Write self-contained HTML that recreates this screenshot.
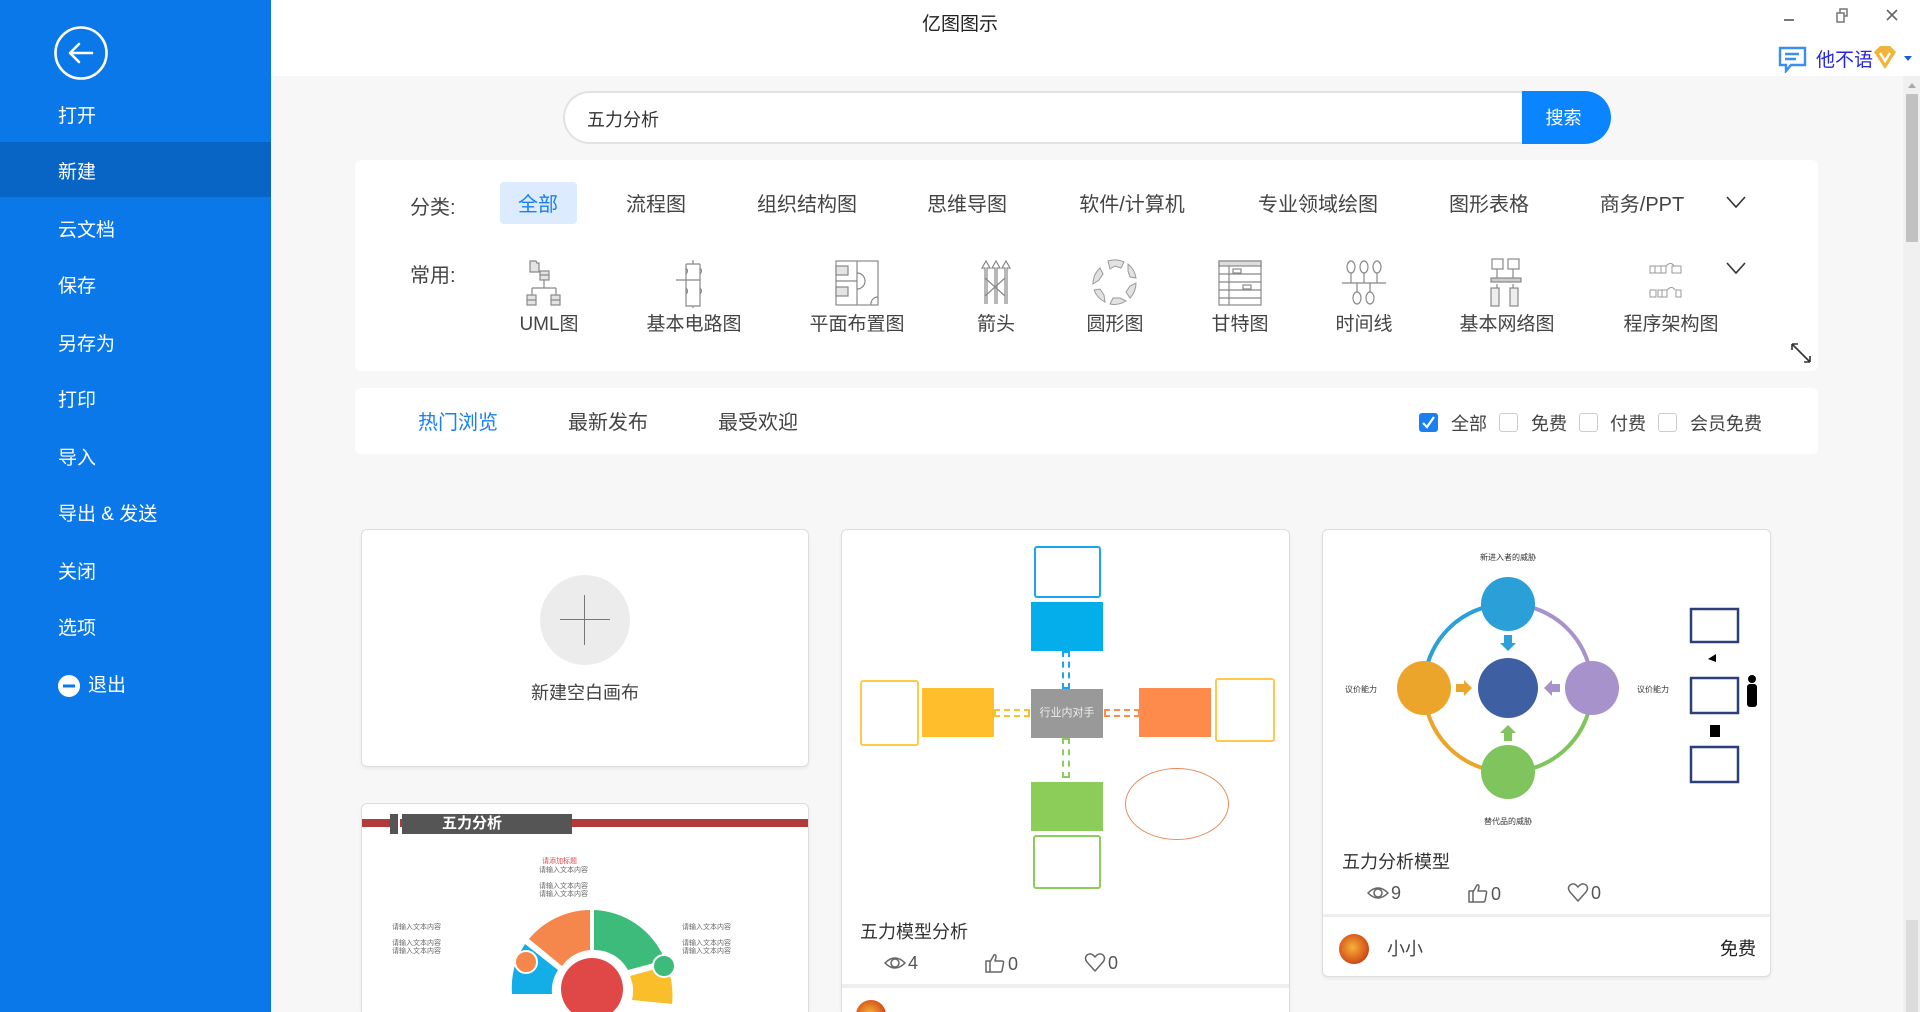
<!DOCTYPE html>
<html><head><meta charset="utf-8">
<style>
*{margin:0;padding:0;box-sizing:border-box}
html{width:1920px;height:1012px;overflow:hidden}
body{width:1920px;height:1012px;overflow:hidden;background:#f7f7f7;font-family:"Liberation Sans","Noto Sans CJK SC",sans-serif;color:#333;position:relative}
.a{position:absolute}
.side{left:0;top:0;width:271px;height:1012px;background:#0b78e9}
.mi{position:absolute;left:58px;color:#fff;font-size:19px;line-height:24px}
.cat{position:absolute;top:193px;font-size:20px;color:#444;line-height:24px;transform:translateX(-50%);white-space:nowrap}
.lab{position:absolute;top:313px;font-size:19px;color:#444;line-height:24px;transform:translateX(-50%);white-space:nowrap}
.ic{position:absolute;top:258px;width:50px;height:50px;transform:translateX(-50%)}
.card{position:absolute;background:#fff;border:1px solid #ddd;border-radius:6px;box-shadow:0 2px 3px rgba(0,0,0,.06);overflow:hidden}
.cb{position:absolute;top:413px;width:19px;height:19px;border:1px solid #ccc;border-radius:3px;background:#fff}
.cl{position:absolute;top:410px;font-size:18px;color:#444}
.st{position:absolute;font-size:18px;color:#555;line-height:22px}
.st svg{vertical-align:-4px;margin-right:2px}
</style></head><body>
<svg width="0" height="0" style="position:absolute"><defs>
<g id="eye"><path d="M1 10Q11 0 21 10Q11 20 1 10Z" fill="none" stroke="#666" stroke-width="1.5"/><circle cx="11" cy="10" r="4" fill="none" stroke="#666" stroke-width="1.5"/></g>
<g id="thumb"><path d="M2 9H6V20H2ZM6 10L10 3Q12 2 12 5L11 9H18Q20 9 19.5 11L18 19Q17.5 20 16 20H6" fill="none" stroke="#666" stroke-width="1.5" stroke-linejoin="round"/></g>
<g id="heart"><path d="M11 19L3 10Q0 6 3 3Q7 0 11 5Q15 0 19 3Q22 6 19 10Z" fill="none" stroke="#666" stroke-width="1.5" stroke-linejoin="round"/></g>
</defs></svg>
<!-- header -->
<div class="a" style="left:271px;top:0;width:1649px;height:76px;background:#fff"></div>
<div class="a" style="left:0;width:1920px;top:9px;text-align:center;font-size:19px;color:#222">亿图图示</div>
<div class="a" style="left:1784px;top:19px;width:10px;height:2px;background:#777"></div>
<svg class="a" style="left:1836px;top:8px" width="14" height="16"><rect x="4" y="1" width="7" height="7" fill="none" stroke="#777" stroke-width="1.5"/><rect x="1" y="5" width="7" height="9" fill="#fff" stroke="#777" stroke-width="1.5"/></svg>
<svg class="a" style="left:1886px;top:9px" width="12" height="12"><path d="M1 1L11 11M11 1L1 11" stroke="#666" stroke-width="1.6"/></svg>
<svg class="a" style="left:1777px;top:45px" width="32" height="28"><path d="M3 3H28V20H14L9 26V20H3Z" fill="none" stroke="#3a8ef0" stroke-width="2.4"/><path d="M8 9H22M8 14H19" stroke="#3a8ef0" stroke-width="2.4"/></svg>
<div class="a" style="left:1816px;top:45px;font-size:19px;color:#2626e0">他不语</div>
<svg class="a" style="left:1873px;top:45px" width="24" height="26"><path d="M1 7L7 1H17L23 7L12 24Z" fill="#f0b43a"/><path d="M7 8L12 16L17 8" fill="none" stroke="#fff" stroke-width="2.4"/></svg>
<div class="a" style="left:1904px;top:56px;width:0;height:0;border-left:4px solid transparent;border-right:4px solid transparent;border-top:5px solid #1a5fd0"></div>
<!-- scrollbar -->
<div class="a" style="left:1903px;top:76px;width:17px;height:936px;background:#f0f0f0"></div>
<div class="a" style="left:1908px;top:83px;border-left:4px solid transparent;border-right:4px solid transparent;border-bottom:5px solid #aaa"></div>
<div class="a" style="left:1906px;top:94px;width:12px;height:148px;background:#c1c1c1"></div>
<div class="a" style="left:1906px;top:920px;width:12px;height:92px;background:#dcdcdc"></div>

<!-- sidebar -->
<div class="a side"></div>
<div class="a" style="left:0;top:142px;width:271px;height:55px;background:#0864c5"></div>
<svg class="a" style="left:53px;top:25px" width="56" height="56"><circle cx="28" cy="28" r="25.5" fill="none" stroke="#fff" stroke-width="2.6"/><path d="M39 28H18M26 19L17 28L26 37" fill="none" stroke="#fff" stroke-width="2.6" stroke-linecap="round" stroke-linejoin="round"/></svg>
<div class="mi" style="top:105px">打开</div>
<div class="mi" style="top:161px">新建</div>
<div class="mi" style="top:219px">云文档</div>
<div class="mi" style="top:275px">保存</div>
<div class="mi" style="top:333px">另存为</div>
<div class="mi" style="top:389px">打印</div>
<div class="mi" style="top:447px">导入</div>
<div class="mi" style="top:503px">导出 &amp; 发送</div>
<div class="mi" style="top:561px">关闭</div>
<div class="mi" style="top:617px">选项</div>
<svg class="a" style="left:57px;top:674px" width="24" height="24"><circle cx="12" cy="12" r="11" fill="#fff"/><rect x="6" y="10.5" width="12" height="3" fill="#0b78e9"/></svg>
<div class="mi" style="top:674px;left:88px">退出</div>

<!-- search -->
<div class="a" style="left:563px;top:91px;width:1000px;height:53px;background:#fff;border:2px solid #e2e2e2;border-right:none;border-radius:27px 0 0 27px"></div>
<div class="a" style="left:587px;top:106px;font-size:18px;color:#333">五力分析</div>
<div class="a" style="left:1522px;top:91px;width:89px;height:53px;background:#0a84ff;border-radius:0 27px 27px 0;color:#fff;font-size:18px;text-align:center;line-height:55px;padding-right:6px">搜索</div>

<!-- category panel -->
<div class="a" style="left:355px;top:160px;width:1463px;height:211px;background:#fff;border-radius:6px"></div>
<div class="a" style="left:410px;top:191px;font-size:20px;color:#444">分类:</div>
<div class="a" style="left:500px;top:182px;width:77px;height:42px;background:#dcebfd;border-radius:4px"></div>
<div class="cat" style="left:538px;color:#1a7ff0">全部</div>
<div class="cat" style="left:656px">流程图</div>
<div class="cat" style="left:807px">组织结构图</div>
<div class="cat" style="left:967px">思维导图</div>
<div class="cat" style="left:1132px">软件/计算机</div>
<div class="cat" style="left:1318px">专业领域绘图</div>
<div class="cat" style="left:1489px">图形表格</div>
<div class="cat" style="left:1642px">商务/PPT</div>
<svg class="a" style="left:1726px;top:195px" width="20" height="14"><path d="M1 2L10 12L19 2" fill="none" stroke="#333" stroke-width="1.6"/></svg>
<svg class="a" style="left:1726px;top:261px" width="20" height="14"><path d="M1 2L10 12L19 2" fill="none" stroke="#333" stroke-width="1.6"/></svg>
<div class="a" style="left:410px;top:259px;font-size:20px;color:#444">常用:</div>
<!-- icons -->
<svg class="ic" style="left:549px" viewBox="0 0 50 50"><g fill="#e4e4e4" stroke="#888" stroke-width="1.2"><path d="M6 3H12L13 5H15V14H6Z"/><rect x="16" y="13" width="9" height="9"/><rect x="3" y="37" width="9" height="10"/><rect x="27" y="37" width="9" height="10"/></g><path d="M20 22V30M8 30H32M8 30V37M32 30V37M16 17H25M3 42H12M27 42H36" stroke="#888" stroke-width="1.2" fill="none"/></svg>
<svg class="ic" style="left:694px" viewBox="0 0 50 50"><g fill="none" stroke="#888" stroke-width="1.2"><path d="M24 2V6M17 6H31M17 6V48H31V6M7 22H31M24 48V52"/><path d="M17 10q3 3 0 6M31 10q3 3 0 6M17 30q3 3 0 6M31 30q3 3 0 6"/></g></svg>
<svg class="ic" style="left:857px" viewBox="0 0 50 50"><g stroke="#888" stroke-width="1.2"><rect x="4" y="3" width="42" height="44" fill="#fff"/><path d="M25 3V47M4 23H25" fill="none"/><rect x="4" y="8" width="12" height="9" fill="#e4e4e4"/><rect x="4" y="29" width="12" height="9" fill="#e4e4e4"/><path d="M25 15A8 8 0 0 1 25 31M46 39A7 7 0 0 0 39 47" fill="none"/></g></svg>
<svg class="ic" style="left:996px" viewBox="0 0 50 50"><g fill="none" stroke="#888" stroke-width="1.2"><path d="M14 46V10L11 10L15 3L19 10H16V46M24 46V10L21 10L25 3L29 10H26V46M34 46V10L31 10L35 3L39 10H36V46"/><path d="M14 20L34 38M34 20L14 38"/></g></svg>
<svg class="ic" style="left:1115px" viewBox="0 0 50 50"><g fill="#e2e2e2" stroke="#999" stroke-width="1"><path d="M18 3A22 22 0 0 1 34 4L31 10L25 8L20 11Z"/><path d="M38 6A22 22 0 0 1 46 20L40 19L38 13Z"/><path d="M46 25A22 22 0 0 1 40 40L36 34L40 28Z"/><path d="M36 43A22 22 0 0 1 20 46L23 40L30 40Z"/><path d="M15 44A22 22 0 0 1 4 32L10 31L14 37Z"/><path d="M3 26A22 22 0 0 1 10 10L13 16L9 22Z"/></g></svg>
<svg class="ic" style="left:1240px" viewBox="0 0 50 50"><g stroke="#888" stroke-width="1.2"><rect x="4" y="3" width="42" height="44" fill="#fff"/><rect x="4" y="3" width="42" height="5" fill="#ddd"/><path d="M4 16H46M4 24H46M4 32H46M4 40H46M14 8V47" fill="none"/><rect x="18" y="11" width="8" height="4" fill="#fff"/><rect x="28" y="27" width="8" height="4" fill="#fff"/></g></svg>
<svg class="ic" style="left:1364px" viewBox="0 0 50 50"><g fill="#fff" stroke="#888" stroke-width="1.2"><ellipse cx="12" cy="9" rx="4" ry="6"/><ellipse cx="25" cy="9" rx="4" ry="6"/><ellipse cx="38" cy="9" rx="4" ry="6"/><ellipse cx="18" cy="40" rx="4" ry="6"/><ellipse cx="31" cy="40" rx="4" ry="6"/><path d="M3 25H47M12 15V25M25 15V25M38 15V25M18 25V34M31 25V34" fill="none"/></g></svg>
<svg class="ic" style="left:1507px" viewBox="0 0 50 50"><g fill="#fff" stroke="#888" stroke-width="1.2"><rect x="10" y="1" width="11" height="10"/><rect x="26" y="1" width="11" height="10"/><path d="M15 11V20M31 11V20M15 26V30M31 26V30"/><rect x="9" y="20" width="30" height="4" fill="#ccc"/><rect x="9" y="30" width="8" height="18" fill="#eee"/><rect x="28" y="30" width="8" height="18" fill="#eee"/></g></svg>
<svg class="ic" style="left:1671px" viewBox="0 0 50 50"><g fill="#fff" stroke="#999" stroke-width="1"><rect x="4" y="8" width="16" height="7"/><rect x="26" y="8" width="9" height="7"/><rect x="4" y="32" width="6" height="7"/><rect x="12" y="32" width="9" height="7"/><rect x="30" y="32" width="5" height="7"/><path d="M9 8V15M15 8V15M16 32V39M20 8q5-5 8 0M21 32q5-5 8 0" fill="none"/></g></svg>
<div class="lab" style="left:549px">UML图</div>
<div class="lab" style="left:694px">基本电路图</div>
<div class="lab" style="left:857px">平面布置图</div>
<div class="lab" style="left:996px">箭头</div>
<div class="lab" style="left:1115px">圆形图</div>
<div class="lab" style="left:1240px">甘特图</div>
<div class="lab" style="left:1364px">时间线</div>
<div class="lab" style="left:1507px">基本网络图</div>
<div class="lab" style="left:1671px">程序架构图</div>
<svg class="a" style="left:1790px;top:342px" width="22" height="22"><path d="M2 2L20 20M2 2V8M2 2H8M20 20V14M20 20H14" fill="none" stroke="#333" stroke-width="1.6"/></svg>

<!-- tabs panel -->
<div class="a" style="left:355px;top:388px;width:1463px;height:66px;background:#fff;border-radius:6px"></div>
<div class="a" style="left:418px;top:406px;font-size:20px;color:#1a7ff0">热门浏览</div>
<div class="a" style="left:568px;top:406px;font-size:20px;color:#444">最新发布</div>
<div class="a" style="left:718px;top:406px;font-size:20px;color:#444">最受欢迎</div>
<div class="cb" style="left:1419px;background:#1a7ff0;border-color:#1a7ff0"><svg width="17" height="17" style="position:absolute;left:0;top:0"><path d="M3 9L7 13L14 3" fill="none" stroke="#fff" stroke-width="2.2"/></svg></div>
<div class="cl" style="left:1451px">全部</div>
<div class="cb" style="left:1499px"></div><div class="cl" style="left:1531px">免费</div>
<div class="cb" style="left:1579px"></div><div class="cl" style="left:1610px">付费</div>
<div class="cb" style="left:1658px"></div><div class="cl" style="left:1690px">会员免费</div>

<!-- card1 -->
<div class="card" style="left:361px;top:529px;width:448px;height:238px">
<div class="a" style="left:178px;top:45px;width:90px;height:90px;border-radius:50%;background:#ececec"></div>
<div class="a" style="left:222px;top:65px;width:1px;height:50px;background:#777"></div>
<div class="a" style="left:198px;top:89px;width:50px;height:1px;background:#777"></div>
<div class="a" style="left:0;width:446px;top:149px;text-align:center;font-size:18px;color:#444">新建空白画布</div>
</div>

<!-- card4 -->
<div class="card" style="left:361px;top:803px;width:448px;height:209px;border-bottom:none;border-radius:6px 6px 0 0">
<div class="a" style="left:0;top:15px;width:448px;height:8px;background:#b23a3a"></div>
<div class="a" style="left:28px;top:10px;width:10px;height:20px;background:#555;border-right:2px solid #fff"></div>
<div class="a" style="left:40px;top:10px;width:170px;height:20px;background:#555;color:#fff;font-size:15px;font-weight:bold;text-align:center;line-height:20px;padding-right:30px">五力分析</div>
<div class="a" style="left:180px;top:52px;font-size:7px;color:#e04848">请添加标题</div>
<div class="a" style="left:177px;top:63px;font-size:7px;color:#666;line-height:8px">请输入文本内容<br><br>请输入文本内容<br>请输入文本内容</div>
<div class="a" style="left:30px;top:120px;font-size:7px;color:#666;line-height:8px">请输入文本内容<br><br>请输入文本内容<br>请输入文本内容</div>
<div class="a" style="left:320px;top:120px;font-size:7px;color:#666;line-height:8px">请输入文本内容<br><br>请输入文本内容<br>请输入文本内容</div>
<svg class="a" style="left:130px;top:100px" width="200" height="130" viewBox="0 0 200 130">
<path d="M98 6A80 80 0 0 0 37 35L70 62A38 38 0 0 1 98 46Z" fill="#f5874c"/>
<path d="M102 6A80 80 0 0 1 173 56L136 66A38 38 0 0 0 102 46Z" fill="#3dbb7a"/>
<path d="M33 40A80 80 0 0 0 20 90L60 90A38 38 0 0 1 66 66Z" fill="#13aee8"/>
<path d="M175 62A80 80 0 0 1 180 100L140 96A38 38 0 0 0 138 72Z" fill="#f9be2a"/>
<circle cx="100" cy="85" r="31" fill="#e04848"/>
<circle cx="34" cy="58" r="11" fill="#f5874c" stroke="#fff" stroke-width="2"/>
<circle cx="172" cy="62" r="11" fill="#3dbb7a" stroke="#fff" stroke-width="2"/>
</svg>
</div>

<!-- card2 -->
<div class="card" style="left:841px;top:529px;width:449px;height:483px;border-bottom:none;border-radius:6px 6px 0 0">
<div class="a" style="left:0;top:454px;width:449px;height:4px;background:#eee"></div>
<div class="a" style="left:14px;top:470px;width:30px;height:30px;border-radius:50%;background:radial-gradient(circle at 45% 45%,#f5b23a,#d8581a 60%,#7a2a10)"></div>
<div class="a" style="left:192px;top:16px;width:67px;height:52px;border:2px solid #1aa5ee;border-radius:3px"></div>
<div class="a" style="left:189px;top:72px;width:72px;height:49px;background:#03aeea"></div>
<div class="a" style="left:220px;top:121px;width:8px;height:38px;border:2px dashed #1aa5ee"></div>
<div class="a" style="left:189px;top:159px;width:72px;height:49px;background:#999;color:#eee;font-size:11px;text-align:center;line-height:49px">行业内对手</div>
<div class="a" style="left:18px;top:150px;width:59px;height:66px;border:2px solid #ffc94a;border-radius:3px"></div>
<div class="a" style="left:80px;top:158px;width:72px;height:49px;background:#ffbe2b"></div>
<div class="a" style="left:152px;top:179px;width:36px;height:8px;border:2px dashed #ffbe2b"></div>
<div class="a" style="left:297px;top:158px;width:72px;height:49px;background:#fe8a4c"></div>
<div class="a" style="left:262px;top:179px;width:36px;height:8px;border:2px dashed #fe8a4c"></div>
<div class="a" style="left:373px;top:148px;width:60px;height:64px;border:2px solid #ffc94a;border-radius:3px"></div>
<div class="a" style="left:220px;top:208px;width:8px;height:40px;border:2px dashed #8ccd5a"></div>
<div class="a" style="left:189px;top:252px;width:72px;height:49px;background:#8ccd5a"></div>
<div class="a" style="left:191px;top:305px;width:68px;height:54px;border:2px solid #8ccd5a;border-radius:3px"></div>
<div class="a" style="left:283px;top:238px;width:104px;height:72px;border:1.5px solid #e88a5c;border-radius:50%"></div>
<div class="a" style="left:18px;top:388px;font-size:18px;color:#333">五力模型分析</div>
<div class="st" style="left:42px;top:422px"><svg width="22" height="20"><use href="#eye"/></svg>4</div>
<div class="st" style="left:142px;top:422px"><svg width="22" height="22"><use href="#thumb"/></svg>0</div>
<div class="st" style="left:242px;top:422px"><svg width="22" height="21"><use href="#heart"/></svg>0</div>
</div>

<!-- card3 -->
<div class="card" style="left:1322px;top:529px;width:449px;height:448px">
<svg class="a" style="left:0;top:0" width="449" height="300">
<path d="M185 74A84 84 0 0 0 101 158" stroke="#2a9fd8" stroke-width="4" fill="none"/>
<path d="M185 74A84 84 0 0 1 269 158" stroke="#a792cc" stroke-width="4" fill="none"/>
<path d="M101 158A84 84 0 0 0 185 242" stroke="#eba52a" stroke-width="4" fill="none"/>
<path d="M269 158A84 84 0 0 1 185 242" stroke="#7fc45c" stroke-width="4" fill="none"/>
<circle cx="185" cy="74" r="27" fill="#2a9fd8"/>
<circle cx="101" cy="158" r="27" fill="#eba52a"/>
<circle cx="269" cy="158" r="27" fill="#a792cc"/>
<circle cx="185" cy="242" r="27" fill="#7fc45c"/>
<circle cx="185" cy="158" r="30" fill="#3e60a3"/>
<path d="M181 105h8v8h4l-8 8-8-8h4z" fill="#2a9fd8"/>
<path d="M181 211h8v-8h4l-8-8-8 8h4z" fill="#7fc45c"/>
<path d="M133 154v8h8v4l8-8-8-8v4z" fill="#eba52a"/>
<path d="M237 154v8h-8v4l-8-8 8-8v4z" fill="#a792cc"/>
<rect x="368" y="79" width="47" height="33" fill="#fff" stroke="#2b3f7a" stroke-width="2.5"/>
<rect x="368" y="148" width="47" height="35" fill="#fff" stroke="#2b3f7a" stroke-width="2.5"/>
<rect x="368" y="217" width="47" height="35" fill="#fff" stroke="#2b3f7a" stroke-width="2.5"/>
<path d="M385 129l8-5v8z" fill="#000"/><rect x="387" y="195" width="10" height="12" fill="#000"/>
<circle cx="429" cy="149" r="4" fill="#000"/><rect x="424" y="154" width="10" height="23" rx="3" fill="#000"/>
<text x="185" y="30" font-size="8" text-anchor="middle" fill="#333">新进入者的威胁</text>
<text x="185" y="294" font-size="8" text-anchor="middle" fill="#333">替代品的威胁</text>
<text x="38" y="162" font-size="8" text-anchor="middle" fill="#333">议价能力</text>
<text x="330" y="162" font-size="8" text-anchor="middle" fill="#333">议价能力</text>
</svg>
<div class="a" style="left:19px;top:318px;font-size:18px;color:#333">五力分析模型</div>
<div class="st" style="left:44px;top:352px"><svg width="22" height="20"><use href="#eye"/></svg>9</div>
<div class="st" style="left:144px;top:352px"><svg width="22" height="22"><use href="#thumb"/></svg>0</div>
<div class="st" style="left:244px;top:352px"><svg width="22" height="21"><use href="#heart"/></svg>0</div>
<div class="a" style="left:0;top:384px;width:449px;height:3px;background:#eee"></div>
<div class="a" style="left:16px;top:404px;width:30px;height:30px;border-radius:50%;background:radial-gradient(circle at 45% 45%,#f5b23a,#d8581a 60%,#7a2a10)"></div>
<div class="a" style="left:64px;top:405px;font-size:18px;color:#444">小小</div>
<div class="a" style="left:397px;top:405px;font-size:18px;color:#222">免费</div>
</div>
</body></html>
